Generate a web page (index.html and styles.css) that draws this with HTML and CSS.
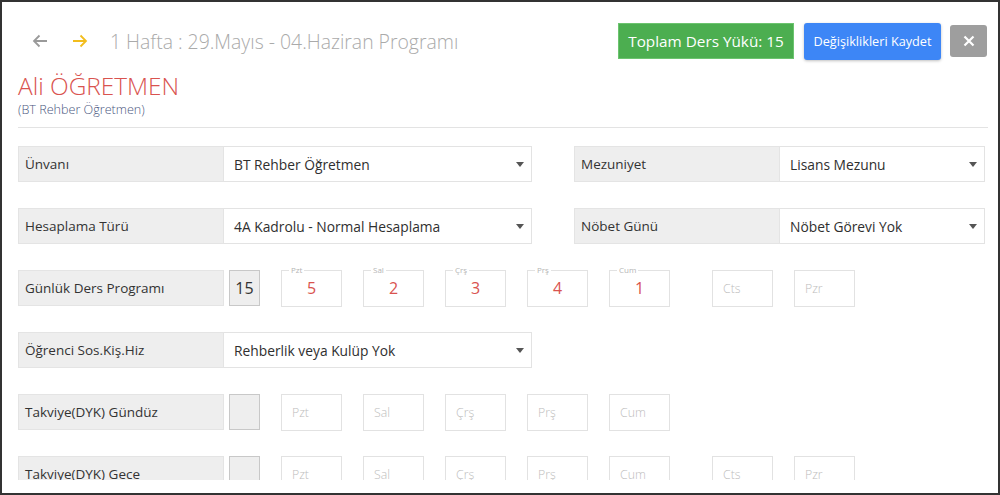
FILE: index.html
```html
<!DOCTYPE html>
<html lang="tr">
<head>
    <meta charset="UTF-8">
    <title>Haftalık Ders Programı</title>
    <link rel="stylesheet" href="styles.css">
</head>
<body>
    <div class="frame">
        <div class="page">
            <div class="topbar">
                <div class="nav">
                    <span class="nav-btn nav-prev">
                        <svg width="16" height="14" viewBox="0 0 16 14"><path d="M15 7H2M7.5 1.5L2 7l5.5 5.5" fill="none" stroke="currentColor" stroke-width="1.8"/></svg>
                    </span>
                    <span class="nav-btn nav-next">
                        <svg width="16" height="14" viewBox="0 0 16 14"><path d="M1 7h13M8.5 1.5L14 7l-5.5 5.5" fill="none" stroke="currentColor" stroke-width="1.8"/></svg>
                    </span>
                    <span class="week-title">1 Hafta : 29.Mayıs - 04.Haziran Programı</span>
                </div>
                <div class="actions">
                    <span class="badge-total">Toplam Ders Yükü: 15</span>
                    <button type="button" class="btn btn-save">Değişiklikleri Kaydet</button>
                    <button type="button" class="btn btn-close">
                        <svg width="12" height="12" viewBox="0 0 12 12"><path d="M1.5 1.5l9 9M10.5 1.5l-9 9" stroke="#ffffff" stroke-width="2.2"/></svg>
                    </button>
                </div>
            </div>

            <div class="teacher">
                <h1 class="teacher-name">Ali ÖĞRETMEN</h1>
                <div class="teacher-role">(BT Rehber Öğretmen)</div>
            </div>

            <div class="form">
                <div class="row">
                    <div class="field field-wide">
                        <div class="field-label">Ünvanı</div>
                        <div class="select">BT Rehber Öğretmen<span class="caret"></span></div>
                    </div>
                    <div class="field field-narrow">
                        <div class="field-label">Mezuniyet</div>
                        <div class="select">Lisans Mezunu<span class="caret"></span></div>
                    </div>
                </div>

                <div class="row">
                    <div class="field field-wide">
                        <div class="field-label">Hesaplama Türü</div>
                        <div class="select">4A Kadrolu - Normal Hesaplama<span class="caret"></span></div>
                    </div>
                    <div class="field field-narrow">
                        <div class="field-label">Nöbet Günü</div>
                        <div class="select">Nöbet Görevi Yok<span class="caret"></span></div>
                    </div>
                </div>

                <div class="row">
                    <div class="field">
                        <div class="field-label">Günlük Ders Programı</div>
                        <div class="total-box">15</div>
                        <div class="days">
                            <div class="day"><span class="day-legend">Pzt</span><span class="day-value">5</span></div>
                            <div class="day"><span class="day-legend">Sal</span><span class="day-value">2</span></div>
                            <div class="day"><span class="day-legend">Çrş</span><span class="day-value">3</span></div>
                            <div class="day"><span class="day-legend">Prş</span><span class="day-value">4</span></div>
                            <div class="day"><span class="day-legend">Cum</span><span class="day-value">1</span></div>
                            <div class="day day-weekend"><span class="day-hint">Cts</span></div>
                            <div class="day"><span class="day-hint">Pzr</span></div>
                        </div>
                    </div>
                </div>

                <div class="row">
                    <div class="field field-wide">
                        <div class="field-label">Öğrenci Sos.Kiş.Hiz</div>
                        <div class="select">Rehberlik veya Kulüp Yok<span class="caret"></span></div>
                    </div>
                </div>

                <div class="row">
                    <div class="field">
                        <div class="field-label">Takviye(DYK) Gündüz</div>
                        <div class="total-box"></div>
                        <div class="days">
                            <div class="day"><span class="day-hint">Pzt</span></div>
                            <div class="day"><span class="day-hint">Sal</span></div>
                            <div class="day"><span class="day-hint">Çrş</span></div>
                            <div class="day"><span class="day-hint">Prş</span></div>
                            <div class="day"><span class="day-hint">Cum</span></div>
                        </div>
                    </div>
                </div>

                <div class="row">
                    <div class="field">
                        <div class="field-label">Takviye(DYK) Gece</div>
                        <div class="total-box"></div>
                        <div class="days">
                            <div class="day"><span class="day-hint">Pzt</span></div>
                            <div class="day"><span class="day-hint">Sal</span></div>
                            <div class="day"><span class="day-hint">Çrş</span></div>
                            <div class="day"><span class="day-hint">Prş</span></div>
                            <div class="day"><span class="day-hint">Cum</span></div>
                            <div class="day day-weekend"><span class="day-hint">Cts</span></div>
                            <div class="day"><span class="day-hint">Pzr</span></div>
                        </div>
                    </div>
                </div>
            </div>
        </div>
    </div>
</body>
</html>
```

FILE: styles.css
```css
:root {
    --text-color: #333333;
    --muted-color: #aaaaaa;
    --red-color: #d9534f;
    --label-bg: #eeeeee;
    --line-color: #e3e3e3;
}

* {
    margin: 0;
    padding: 0;
    box-sizing: border-box;
    font-family: 'Open Sans', 'Noto Sans', sans-serif;
}

body {
    background-color: #ffffff;
    color: var(--text-color);
}

.frame {
    width: 1000px;
    height: 495px;
    border: 2px solid #333333;
    padding-bottom: 13px;
    background-color: #ffffff;
}

.page {
    height: 100%;
    overflow: hidden;
    padding: 20px 11px 0 16px;
}

/* ust bar */
.topbar {
    display: flex;
    justify-content: space-between;
    align-items: center;
    height: 38px;
}

.nav {
    display: flex;
    align-items: center;
    padding-left: 14px;
}

.nav-btn {
    display: flex;
    width: 40px;
    height: 20px;
    align-items: center;
}

.nav-prev {
    color: #9a9a9a;
}

.nav-next {
    color: #f2bd1d;
    width: 38px;
}

.week-title {
    font-size: 19.4px;
    font-weight: 300;
    color: var(--muted-color);
}

.actions {
    display: flex;
    align-items: center;
}

.badge-total {
    display: flex;
    align-items: center;
    justify-content: center;
    width: 176px;
    height: 36px;
    background-color: #4cae50;
    border: 1px solid #6cc46f;
    color: #ffffff;
    font-size: 15.3px;
    margin-right: 10px;
}

.btn {
    border: none;
    border-radius: 3px;
    color: #ffffff;
    cursor: pointer;
}

.btn-save {
    width: 137px;
    height: 37px;
    background-color: #3d86f6;
    font-size: 12.7px;
    box-shadow: 0 1px 3px rgba(0, 0, 0, 0.25);
    margin-right: 9px;
}

.btn-close {
    width: 37px;
    height: 32px;
    background-color: #9e9e9e;
    display: flex;
    align-items: center;
    justify-content: center;
}

/* ogretmen */
.teacher {
    padding: 12px 0 7px;
    border-bottom: 1px solid var(--line-color);
    margin-right: -1px;
}

.teacher-name {
    font-size: 24.4px;
    font-weight: 300;
    color: var(--red-color);
    line-height: 28px;
}

.teacher-role {
    font-size: 12.6px;
    font-weight: 300;
    color: #4a5780;
    line-height: 20px;
}

/* form */
.form {
    padding-top: 18px;
}

.row {
    display: flex;
    gap: 42px;
    height: 62px;
}

.field {
    display: flex;
    height: 36px;
}

.field-wide {
    width: 514px;
}

.field-narrow {
    width: 411px;
}

.field-label {
    flex: 0 0 206px;
    display: flex;
    align-items: center;
    padding-left: 6px;
    background-color: var(--label-bg);
    border: 1px solid #e4e4e4;
    font-size: 13.5px;
    color: #333333;
}

.select {
    flex: 1;
    position: relative;
    display: flex;
    align-items: center;
    padding-left: 10px;
    border: 1px solid var(--line-color);
    border-left: none;
    font-size: 13.8px;
    color: #2f2f2f;
}

.caret {
    position: absolute;
    right: 7px;
    top: 15px;
    border-left: 4.5px solid transparent;
    border-right: 4.5px solid transparent;
    border-top: 5px solid #555555;
}

.total-box {
    width: 31px;
    height: 36px;
    margin-left: 5px;
    display: flex;
    align-items: center;
    justify-content: center;
    background-color: var(--label-bg);
    border: 1px solid #c8c8c8;
    font-size: 16px;
    color: #333333;
}

.days {
    display: flex;
    gap: 21px;
    margin-left: 21px;
}

.day {
    position: relative;
    width: 61px;
    height: 37px;
    border: 1px solid #e2e2e2;
    display: flex;
    align-items: center;
}

.day-weekend {
    margin-left: 21px;
}

.day-legend {
    position: absolute;
    top: -6px;
    left: 7px;
    padding: 0 2px;
    background-color: #ffffff;
    font-size: 8px;
    line-height: 10px;
    color: #b5b5b5;
}

.day-value {
    width: 100%;
    text-align: center;
    font-size: 16px;
    color: var(--red-color);
    padding-bottom: 1px;
}

.day-hint {
    padding-left: 10px;
    font-size: 12.3px;
    font-weight: 300;
    color: #bdbdbd;
}
```
